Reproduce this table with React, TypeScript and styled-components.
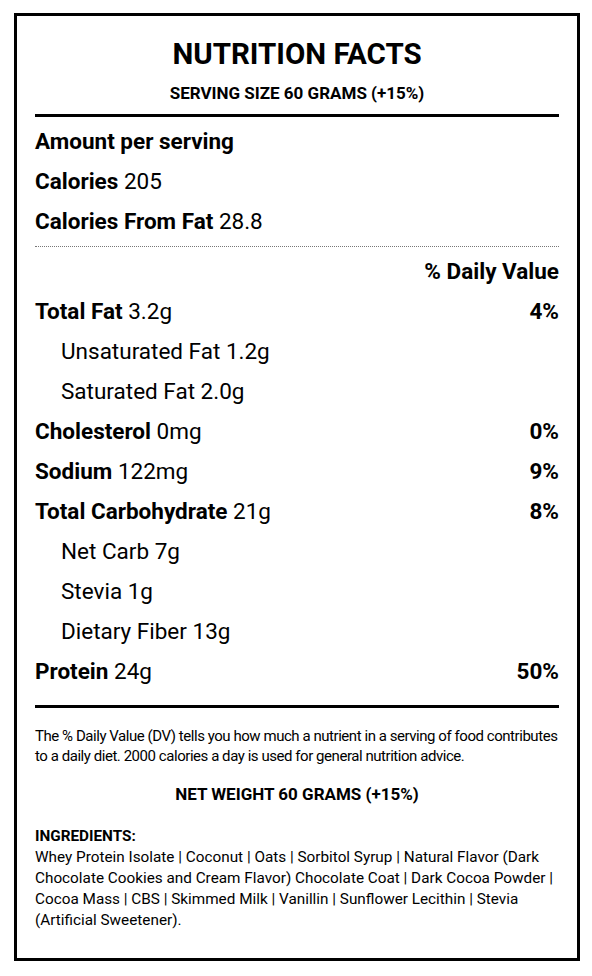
import React from 'react';
import styled, { createGlobalStyle } from 'styled-components';

interface Nutrient {
  name: string;
  amount: string;
  daily?: string;
  sub?: boolean;
}

const nutrients: Nutrient[] = [
  { name: 'Total Fat', amount: '3.2g', daily: '4%' },
  { name: 'Unsaturated Fat', amount: '1.2g', sub: true },
  { name: 'Saturated Fat', amount: '2.0g', sub: true },
  { name: 'Cholesterol', amount: '0mg', daily: '0%' },
  { name: 'Sodium', amount: '122mg', daily: '9%' },
  { name: 'Total Carbohydrate', amount: '21g', daily: '8%' },
  { name: 'Net Carb', amount: '7g', sub: true },
  { name: 'Stevia', amount: '1g', sub: true },
  { name: 'Dietary Fiber', amount: '13g', sub: true },
  { name: 'Protein', amount: '24g', daily: '50%' },
];

const ingredients =
  'Whey Protein Isolate | Coconut | Oats | Sorbitol Syrup | Natural Flavor (Dark Chocolate Cookies and Cream Flavor) Chocolate Coat | Dark Cocoa Powder | Cocoa Mass | CBS | Skimmed Milk | Vanillin | Sunflower Lecithin | Stevia (Artificial Sweetener).';

const App = () => (
  <>
    <GlobalStyle />
    <Page>
      <Label>
        <Title>NUTRITION FACTS</Title>
        <Serving>SERVING SIZE 60 GRAMS (+15%)</Serving>
        <ThickRule $gap={11} />
        <Section $top={4}>
          <Row><Bold>Amount per serving</Bold></Row>
          <Row><span><Bold>Calories</Bold> 205</span></Row>
          <Row><span><Bold>Calories From Fat</Bold> 28.8</span></Row>
        </Section>
        <DottedRule />
        <Section>
          <Row $right><Bold>% Daily Value</Bold></Row>
          {nutrients.map((n) => (
            <Row key={n.name}>
              {n.sub ? (
                <SubItem>{n.name} {n.amount}</SubItem>
              ) : (
                <span><Bold>{n.name}</Bold> {n.amount}</span>
              )}
              {n.daily && <Bold>{n.daily}</Bold>}
            </Row>
          ))}
        </Section>
        <ThickRule $gap={14} />
        <Footnote>
          The % Daily Value (DV) tells you how much a nutrient in a serving of food contributes
          to a daily diet. 2000 calories a day is used for general nutrition advice.
        </Footnote>
        <NetWeight>NET WEIGHT 60 GRAMS (+15%)</NetWeight>
        <Ingredients>
          <IngredientsTitle>INGREDIENTS:</IngredientsTitle>
          <IngredientsText>{ingredients}</IngredientsText>
        </Ingredients>
      </Label>
    </Page>
  </>
);

const GlobalStyle = createGlobalStyle`
  body {
    margin: 0;
    background: #fff;
    font-family: Roboto, "Liberation Sans", sans-serif;
    color: #000;
  }
`;

const Page = styled.div`
  padding: 13px 0 0 14px;
`;

const Label = styled.div`
  box-sizing: border-box;
  width: 566px;
  height: 948px;
  border: 3px solid #000;
  padding: 0 18px;
  display: flex;
  flex-direction: column;
`;

const Title = styled.h1`
  margin: 21px 0 0;
  font-size: 29.5px;
  line-height: 34px;
  font-weight: 700;
  text-align: center;
`;

const Serving = styled.div`
  margin-top: 12px;
  font-size: 17px;
  line-height: 20px;
  font-weight: 700;
  text-align: center;
`;

const ThickRule = styled.div<{ $gap: number }>`
  height: 3px;
  background: #000;
  margin-top: ${(p) => p.$gap}px;
`;

const DottedRule = styled.div`
  border-top: 1px dotted #777;
  margin: 5px 0 4px;
`;

const Section = styled.div<{ $top?: number }>`
  display: flex;
  flex-direction: column;
  margin-top: ${(p) => p.$top ?? 0}px;
`;

const Row = styled.div<{ $right?: boolean }>`
  display: flex;
  justify-content: ${(p) => (p.$right ? 'flex-end' : 'space-between')};
  align-items: center;
  height: 40px;
  font-size: 22.5px;
`;

const Bold = styled.b`
  font-weight: 700;
`;

const SubItem = styled.span`
  padding-left: 26px;
`;

const Footnote = styled.p`
  margin: 18px 0 0;
  font-size: 15px;
  letter-spacing: -0.45px;
  line-height: 20px;
`;

const NetWeight = styled.div`
  margin-top: 18px;
  font-size: 17px;
  line-height: 20px;
  font-weight: 700;
  text-align: center;
`;

const Ingredients = styled.div`
  margin-top: 22px;
  font-size: 15.3px;
`;

const IngredientsTitle = styled.div`
  font-weight: 700;
  line-height: 21px;
`;

const IngredientsText = styled.div`
  line-height: 21px;
`;

export default App;
